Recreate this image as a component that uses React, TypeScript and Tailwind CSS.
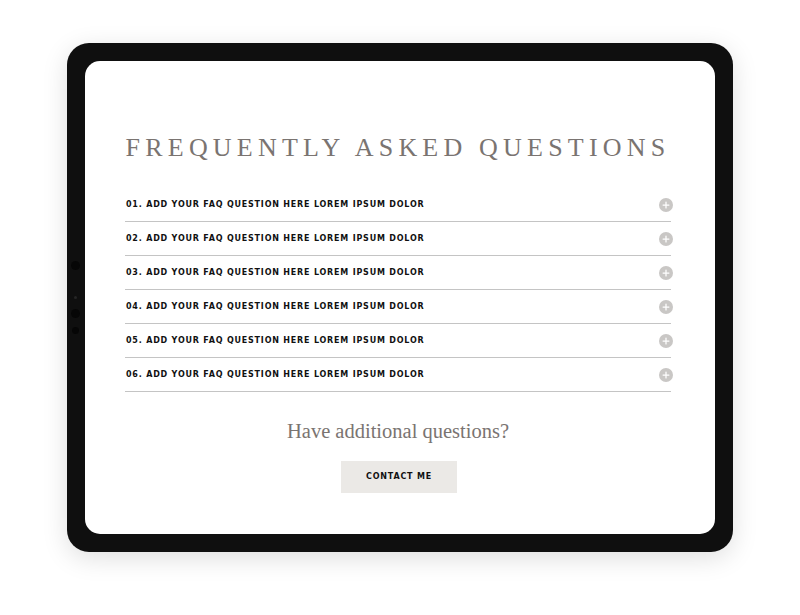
import { Plus } from "lucide-react";

const questions = [1, 2, 3, 4, 5, 6].map((n) => `0${n}. ADD YOUR FAQ QUESTION HERE LOREM IPSUM DOLOR`);

function FaqRow({ label }: { label: string }) {
  return (
    <div className="flex h-[34px] items-center justify-between border-b border-[#c4c4c4] pl-px">
      <span className="text-[8px] font-bold tracking-[0.1em] text-[#111]" style={{ fontFamily: "'DejaVu Sans', sans-serif" }}>
        {label}
      </span>
      <span className="flex h-[14px] w-[14px] translate-x-[2px] items-center justify-center rounded-full bg-[#c9c7c5]">
        <Plus size={10} strokeWidth={3} color="#ffffff" />
      </span>
    </div>
  );
}

export default function App() {
  return (
    <div className="min-h-[615px] w-[800px] bg-white pt-[43px]">
      <div className="relative ml-[67px] h-[509px] w-[666px] rounded-[22px] bg-[#0f0f0f] p-[18px] shadow-[0_6px_26px_rgba(0,0,0,0.13)]">
        {/* side sensors on the bezel */}
        <span className="absolute left-[4px] top-[218px] h-[9px] w-[9px] rounded-full bg-[#060606]" />
        <span className="absolute left-[7px] top-[253px] h-[3px] w-[3px] rounded-full bg-[#262626]" />
        <span className="absolute left-[4px] top-[266px] h-[9px] w-[9px] rounded-full bg-[#060606]" />
        <span className="absolute left-[5px] top-[284px] h-[7px] w-[7px] rounded-full bg-[#060606]" />

        <div className="flex h-full flex-col rounded-[15px] bg-white pl-[40px] pr-[44px] pt-[72px]">
          <h1
            className="text-center text-[26px] leading-[30px] tracking-[0.2em] text-[#7a7471]"
            style={{ fontFamily: "'Liberation Serif', serif" }}
          >
            FREQUENTLY ASKED QUESTIONS
          </h1>

          <div className="mt-[25px] flex flex-col">
            {questions.map((q) => (
              <FaqRow key={q} label={q} />
            ))}
          </div>

          <p
            className="mt-[27px] text-center text-[20.5px] leading-[24px] text-[#7a7471]"
            style={{ fontFamily: "'Liberation Serif', serif" }}
          >
            Have additional questions?
          </p>

          <div className="mt-[18px] flex justify-center">
            <button
              className="ml-[2px] h-[32px] w-[116px] bg-[#ebe9e6] text-[8px] font-bold tracking-[0.1em] text-[#111]"
              style={{ fontFamily: "'DejaVu Sans', sans-serif" }}
            >
              CONTACT ME
            </button>
          </div>
        </div>
      </div>
    </div>
  );
}
